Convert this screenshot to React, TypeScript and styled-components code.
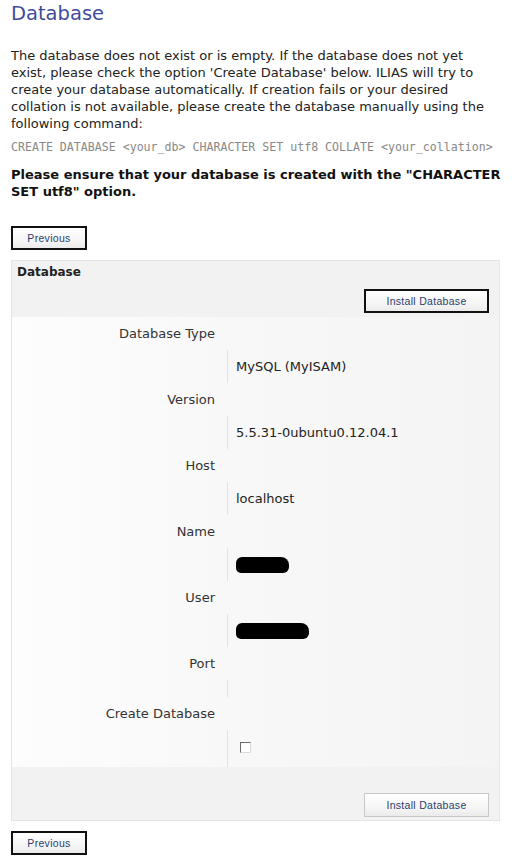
import React from 'react';
import styled, { createGlobalStyle } from 'styled-components';

const GlobalStyle = createGlobalStyle`
  body {
    margin: 0;
    background: #ffffff;
    font-family: "DejaVu Sans", Verdana, sans-serif;
    color: #222;
  }
`;

const Page = styled.div`
  width: 490px;
  padding: 0 0 0 11px;
`;

const Title = styled.h1`
  margin: 0;
  font-size: 19.5px;
  line-height: 27px;
  font-weight: normal;
  color: #3f4c9c;
`;

const Intro = styled.p`
  margin: 20px 0 0;
  font-size: 13px;
  line-height: 17px;
  color: #222;
`;

const Command = styled.div`
  margin-top: 6.5px;
  font-family: "DejaVu Sans Mono", monospace;
  font-size: 11.6px;
  line-height: 17px;
  color: #888;
  white-space: nowrap;
`;

const Notice = styled.p`
  margin: 10px 0 0;
  font-size: 13px;
  line-height: 17px;
  font-weight: bold;
  color: #111;
`;

const Button = styled.button<{ $focus?: boolean; $wide?: boolean }>`
  display: block;
  box-sizing: border-box;
  width: ${({ $wide }) => ($wide ? 125 : 76)}px;
  height: 24px;
  padding: 0;
  font-family: "Liberation Sans", Arial, sans-serif;
  font-size: 10.5px;
  letter-spacing: 0.3px;
  color: #2d3c6c;
  background: linear-gradient(to bottom, #ffffff 0%, #f6f6f6 60%, #ebebeb 100%);
  border: ${({ $focus }) => ($focus ? '2px solid #111' : '1px solid #c8c8c8')};
  border-radius: 0;
  cursor: pointer;
`;

const TopPrevious = styled.div`
  margin-top: 26.5px;
`;

const Panel = styled.div`
  margin-top: 10px;
  width: 489px;
  box-sizing: border-box;
  background: #f2f2f2;
  border: 1px solid #e4e4e4;
`;

const PanelHeader = styled.div`
  display: flex;
  flex-direction: column;
  padding: 2.5px 10px 4px 5px;
`;

const PanelTitle = styled.h3`
  margin: 0;
  font-size: 12px;
  line-height: 17px;
  font-weight: bold;
  color: #222;
`;

const ButtonRow = styled.div<{ $top: number }>`
  display: flex;
  justify-content: flex-end;
  margin-top: ${({ $top }) => $top}px;
`;

const Form = styled.div`
  display: flex;
  flex-direction: column;
  background: linear-gradient(to right, #fdfdfd 0%, #f8f8f8 45%, #f4f4f4 100%);
`;

const Label = styled.div`
  box-sizing: border-box;
  width: 215px;
  padding: 8px 12px 8px 0;
  text-align: right;
  font-size: 13px;
  line-height: 17px;
  color: #333;
`;

const Value = styled.div<{ $h: number; $pad: number }>`
  box-sizing: border-box;
  margin-left: 215px;
  height: ${({ $h }) => $h}px;
  padding: ${({ $pad }) => $pad}px 8px;
  border-left: 1px solid #e3e3e3;
  font-size: 13px;
  line-height: 17px;
  color: #222;
`;

const Redacted = styled.span<{ $w: number }>`
  display: inline-block;
  width: ${({ $w }) => $w}px;
  height: 16px;
  background: #000;
  border-radius: 6px 8px 6px 5px;
  vertical-align: top;
  margin-top: 1px;
`;

const Check = styled.span`
  display: inline-block;
  box-sizing: border-box;
  width: 11px;
  height: 11px;
  margin: 3px 0 0 4px;
  background: #fff;
  border-top: 1px solid #6a6a6a;
  border-left: 1px solid #6a6a6a;
  border-right: 1px solid #dcdcdc;
  border-bottom: 1px solid #dcdcdc;
`;

const PanelFooter = styled.div`
  padding: 26px 10px 3px 0;
`;

const BottomPrevious = styled.div`
  margin-top: 10px;
  padding-bottom: 5px;
`;

type Field = { label: string; value: React.ReactNode; h?: number; pad?: number };

const fields: Field[] = [
  { label: 'Database Type', value: 'MySQL (MyISAM)' },
  { label: 'Version', value: '5.5.31-0ubuntu0.12.04.1' },
  { label: 'Host', value: 'localhost' },
  { label: 'Name', value: <Redacted $w={53} /> },
  { label: 'User', value: <Redacted $w={73} /> },
  { label: 'Port', value: null, h: 17, pad: 0 },
  { label: 'Create Database', value: <Check />, h: 37, pad: 9 },
];

export default function App() {
  return (
    <>
      <GlobalStyle />
      <Page>
        <Title>Database</Title>
        <Intro>
          The database does not exist or is empty. If the database does not yet exist, please
          check the option 'Create Database' below. ILIAS will try to create your database
          automatically. If creation fails or your desired collation is not available, please
          create the database manually using the following command:
        </Intro>
        <Command>CREATE DATABASE &lt;your_db&gt; CHARACTER SET utf8 COLLATE &lt;your_collation&gt;</Command>
        <Notice>
          Please ensure that your database is created with the "CHARACTER SET utf8" option.
        </Notice>
        <TopPrevious>
          <Button $focus>Previous</Button>
        </TopPrevious>
        <Panel>
          <PanelHeader>
            <PanelTitle>Database</PanelTitle>
            <ButtonRow $top={8.5}>
              <Button $focus $wide>Install Database</Button>
            </ButtonRow>
          </PanelHeader>
          <Form>
            {fields.map((f) => (
              <React.Fragment key={f.label}>
                <Label>{f.label}</Label>
                <Value $h={f.h ?? 33} $pad={f.pad ?? 8}>
                  {f.value}
                </Value>
              </React.Fragment>
            ))}
          </Form>
          <PanelFooter>
            <ButtonRow $top={0}>
              <Button $wide>Install Database</Button>
            </ButtonRow>
          </PanelFooter>
        </Panel>
        <BottomPrevious>
          <Button $focus>Previous</Button>
        </BottomPrevious>
      </Page>
    </>
  );
}
